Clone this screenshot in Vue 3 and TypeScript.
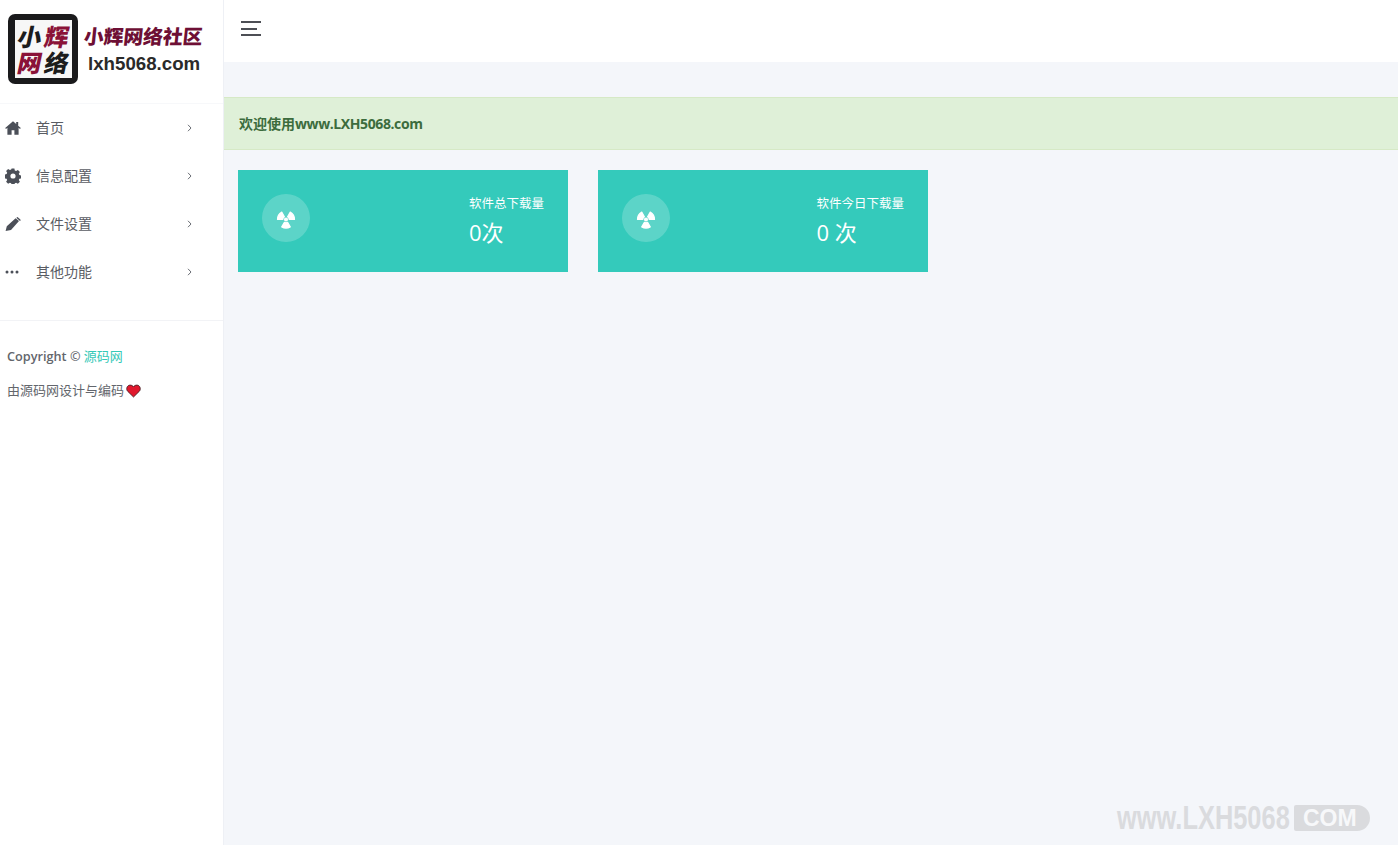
<script setup lang="ts">
interface MenuItem { label: string; icon: string }
const menu: MenuItem[] = [
  { label: '首页', icon: 'home' },
  { label: '信息配置', icon: 'gear' },
  { label: '文件设置', icon: 'pencil' },
  { label: '其他功能', icon: 'dots' },
]
const cards = [
  { title: '软件总下载量', value: '0次' },
  { title: '软件今日下载量', value: '0 次' },
]
</script>

<template>
  <div class="app">
    <aside class="sidebar">
      <div class="brand">
        <div class="logo-box">
          <div class="logo-inner">
            <span class="lg k">小</span><span class="lg r">辉</span>
            <span class="lg r">网</span><span class="lg k">络</span>
          </div>
        </div>
        <div class="brand-text">
          <div class="brand-cn">小辉网络社区</div>
          <div class="brand-en">lxh5068.com</div>
        </div>
      </div>
      <nav class="menu">
        <a v-for="m in menu" :key="m.label" class="menu-item">
          <span class="menu-icon">
            <svg v-if="m.icon === 'home'" width="16" height="14" viewBox="0 0 16 14"><path fill="#4b4f58" d="M8 .3 .2 7l.8 1L2.400 6.800v6.900h4.200V9.300h2.800v4.400h4.200V6.800L15 8l.8-1-2.600-2.200V1h-2v2z"/></svg>
            <svg v-else-if="m.icon === 'gear'" width="16" height="16" viewBox="0 0 16 16"><path fill="#4b4f58" fill-rule="evenodd" d="M6.600.5h2.800l.4 2 1.300.6 1.800-1.100 2 2-1.100 1.800.6 1.300 2 .4v2.800l-2 .4-.6 1.300 1.100 1.800-2 2-1.800-1.100-1.300.6-.4 2H6.600l-.4-2-1.300-.6-1.800 1.100-2-2 1.100-1.800-.6-1.300-2-.4V6.500l2-.4.6-1.300-1.100-1.800 2-2 1.800 1.100 1.300-.6zM8 5.400a2.600 2.600 0 1 0 0 5.200 2.600 2.600 0 0 0 0-5.200z"/></svg>
            <svg v-else-if="m.icon === 'pencil'" width="16" height="14" viewBox="0 0 16 14"><path fill="#4b4f58" d="M10.600 1.200 14 4 6 13 .6 14l1.200-4.700zM11.600.4l.9-.4 2.900 2.400.2 1-.6.500-3.500-3z"/></svg>
            <svg v-else width="14" height="4" viewBox="0 0 14 4"><circle cx="2" cy="2" r="1.500" fill="#4b4f58"/><circle cx="7" cy="2" r="1.500" fill="#4b4f58"/><circle cx="12" cy="2" r="1.500" fill="#4b4f58"/></svg>
          </span>
          <span class="menu-label">{{ m.label }}</span>
          <svg class="chev" width="5" height="8" viewBox="0 0 5 8"><path d="M1 .8 4 4 1 7.200" fill="none" stroke="#6b6f76" stroke-width="1"/></svg>
        </a>
      </nav>
      <div class="foot">
        <p class="copy">Copyright © <a class="link">源码网</a></p>
        <p class="made">由源码网设计与编码<svg class="heart" width="15" height="14" viewBox="0 0 15 14"><path fill="#e0182d" stroke="#3a1a1e" stroke-width=".8" d="M7.500 13 1.600 7.200C-.2 5.300.8 1.400 3.900 1.100c1.600-.1 2.900.6 3.600 1.900.7-1.300 2-2 3.600-1.900 3.100.3 4.100 4.200 2.300 6.100z"/></svg></p>
      </div>
    </aside>
    <main class="main">
      <header class="topbar">
        <span class="burger"><i class="b1"></i><i class="b2"></i><i class="b3"></i></span>
      </header>
      <div class="alert">欢迎使用<span class="alert-en">www.LXH5068.com</span></div>
      <section class="cards">
        <div v-for="c in cards" :key="c.title" class="card">
          <div class="circle">
            <svg class="rad" width="20" height="19" viewBox="0 0 20 19" fill="#fff" stroke="#fff" stroke-width="1.200" stroke-linejoin="round">
              <circle cx="10" cy="9.500" r="1.400"/>
              <path d="M8.400 6.730 5.750 2.140A8.500 8.500 0 0 0 1.500 9.500L6.800 9.500A3.200 3.200 0 0 1 8.400 6.730z"/>
              <path d="M11.600 6.730 14.250 2.140A8.500 8.500 0 0 1 18.500 9.500L13.200 9.500A3.200 3.200 0 0 0 11.600 6.730z"/>
              <path d="M8.400 12.270 5.750 16.860A8.500 8.500 0 0 0 14.250 16.860L11.600 12.270A3.200 3.200 0 0 1 8.400 12.270z"/>
            </svg>
          </div>
          <div class="card-text">
            <div class="card-title">{{ c.title }}</div>
            <div class="card-value">{{ c.value }}</div>
          </div>
        </div>
      </section>
      <div class="watermark">
        <span class="wm-text">www.LXH5068</span>
        <span class="wm-pill">COM</span>
      </div>
    </main>
  </div>
</template>

<style>
html, body { margin: 0; height: 100%; background: #f4f6fa; overflow: hidden; }
</style>

<style scoped>
.app {
  display: flex;
  height: 845px;
  font-family: "Open Sans", "Noto Sans CJK SC", sans-serif;
  color: #555;
  background: #f4f6fa;
}
.sidebar {
  flex: none;
  width: 223px;
  background: #fff;
  border-right: 1px solid #eef0f5;
  display: flex;
  flex-direction: column;
}
.brand {
  height: 104px;
  box-sizing: border-box;
  padding: 14px 0 0 8px;
  display: flex;
  gap: 6px;
  border-bottom: 1px solid #f7f8fa;
}
.logo-box {
  width: 70px;
  height: 70px;
  background: #1a1a1c;
  border-radius: 7px;
  box-sizing: border-box;
  padding: 6px 6px 6px 7px;
}
.logo-inner {
  width: 57px;
  height: 58px;
  box-sizing: border-box;
  padding: 3px 2px;
  background: #f7f7f7;
  display: grid;
  grid-template-columns: 1fr 1fr;
  grid-template-rows: 26px 26px;
}
.lg {
  font-family: "Noto Sans CJK SC", sans-serif;
  font-weight: 900;
  font-size: 24px;
  line-height: 26px;
  text-align: center;
  display: block;
  transform: skewX(-12deg);
}
.k { color: #1c1c1c; }
.r { color: #8a1238; }
.brand-text { padding-top: 8px; }
.brand-cn {
  font-family: "Noto Sans CJK SC", sans-serif;
  font-weight: 900;
  font-size: 19.800px;
  line-height: 28px;
  color: #6e0f35;
  white-space: nowrap;
  transform: skewX(-6deg);
}
.brand-en {
  font-family: "Liberation Sans", Arial, sans-serif;
  font-weight: 700;
  font-size: 18.700px;
  line-height: 28px;
  margin-left: 4px;
  color: #2a2a2a;
}
.menu {
  height: 217px;
  border-bottom: 1px solid #f2f3f6;
  box-sizing: border-box;
}
.menu-item {
  display: flex;
  align-items: center;
  height: 48px;
  font-size: 14px;
  color: #595c63;
}
.menu-icon {
  width: 36px;
  padding-left: 5px;
  box-sizing: border-box;
  display: flex;
  align-items: center;
  height: 16px;
}
.menu-label { flex: 1; font-family: "Noto Sans CJK SC", sans-serif; padding-bottom: 2px; }
.chev { margin-right: 31px; }
.foot { padding: 25px 0 0 7px; font-size: 12.700px; font-weight: 600; }
.copy { margin: 0; line-height: 20px; color: #63666c; }
.link { color: #35c9b7; font-family: "Noto Sans CJK SC", sans-serif; font-weight: 400; font-size: 13px; }
.made {
  margin: 14px 0 0;
  line-height: 20px;
  color: #63666c;
  font-size: 13px;
  font-weight: 400;
  font-family: "Noto Sans CJK SC", sans-serif;
  display: flex;
  align-items: center;
}
.heart { margin-left: 2px; margin-top: 1px; }
.main { flex: 1; min-width: 0; position: relative; }
.topbar {
  height: 62px;
  background: #fff;
  box-sizing: border-box;
  padding: 21px 0 0 17px;
}
.burger { display: flex; flex-direction: column; gap: 4.500px; width: 20px; }
.burger i { display: block; height: 2px; background: #4d4f55; }
.burger .b1 { width: 20px; }
.burger .b2 { width: 16px; }
.burger .b3 { width: 20px; }
.alert {
  margin-top: 35px;
  height: 53px;
  box-sizing: border-box;
  background: #dff0d8;
  border-top: 1px solid #d6e9c6;
  border-bottom: 1px solid #d6e9c6;
  padding-left: 15px;
  line-height: 51px;
  font-size: 14px;
  font-weight: 700;
  color: #3c6c3d;
}
.alert-en { letter-spacing: -.4px; }
.cards { display: flex; gap: 30px; padding: 20px 0 0 14px; }
.card {
  width: 330px;
  height: 102px;
  background: #34cabb;
  display: flex;
  justify-content: space-between;
  box-sizing: border-box;
  padding: 24px 24px 0;
}
.circle {
  width: 48px;
  height: 48px;
  border-radius: 50%;
  background: rgba(255, 255, 255, .2);
  display: flex;
  align-items: center;
  justify-content: center;
}
.rad { margin-top: 2px; }
.card-text { color: #fff; }
.card-title {
  font-family: "Noto Sans CJK SC", sans-serif;
  font-size: 12.500px;
  line-height: 20px;
  margin-top: -1px;
}
.card-value {
  font-family: "Open Sans", "Noto Sans CJK SC", sans-serif;
  font-size: 22px;
  line-height: 30px;
  margin-top: 4px;
}
.watermark {
  position: absolute;
  right: 28px;
  bottom: 13px;
  display: flex;
  align-items: center;
  gap: 4px;
  color: #dadbde;
}
.wm-text {
  font-family: "Liberation Sans", sans-serif;
  font-weight: 700;
  font-size: 33px;
  line-height: 28px;
  display: inline-block;
  width: 173px;
  white-space: nowrap;
  transform: scaleX(.77);
  transform-origin: left center;
}
.wm-pill {
  width: 76px;
  height: 26px;
  box-sizing: border-box;
  background: #dadbde;
  color: #f7f8fa;
  border-radius: 2px 13px 13px 2px;
  font-family: "Liberation Sans", sans-serif;
  font-weight: 700;
  font-size: 23px;
  line-height: 26px;
  padding-left: 9px;
}
</style>
